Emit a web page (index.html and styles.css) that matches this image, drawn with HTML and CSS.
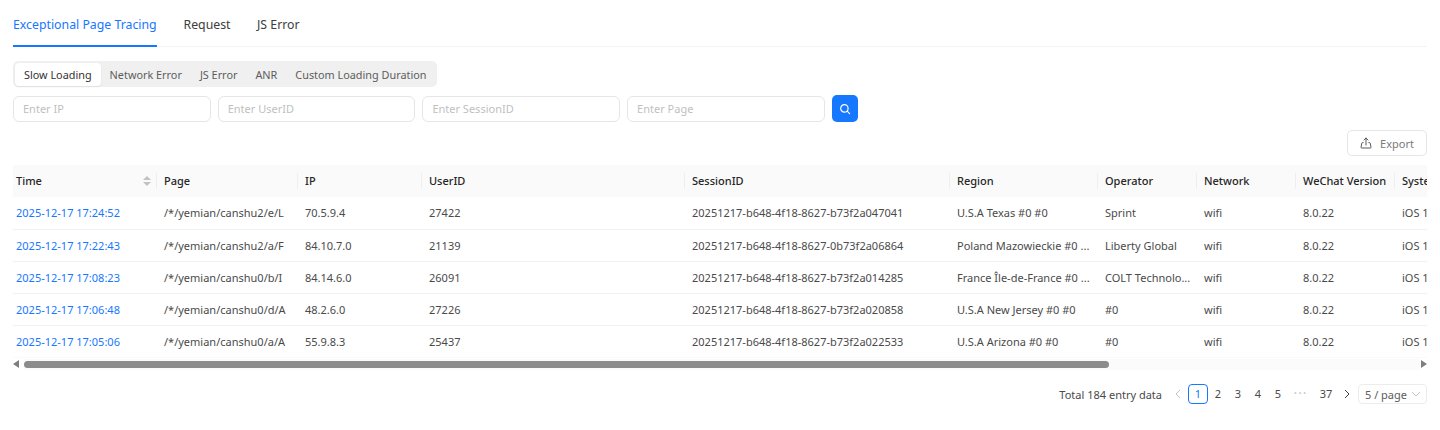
FILE: index.html
```html
<!DOCTYPE html>
<html lang="en">
<head>
<meta charset="utf-8">
<title>Exceptional Page Tracing</title>
<link rel="stylesheet" href="styles.css">
</head>
<body>
<main class="page">
  <nav class="tabs">
    <a class="tab active">Exceptional Page Tracing</a>
    <a class="tab">Request</a>
    <a class="tab">JS Error</a>
  </nav>
  <div class="segmented">
    <span class="seg selected">Slow Loading</span>
    <span class="seg">Network Error</span>
    <span class="seg">JS Error</span>
    <span class="seg">ANR</span>
    <span class="seg">Custom Loading Duration</span>
  </div>
  <div class="filters">
    <input class="field" placeholder="Enter IP">
    <input class="field" placeholder="Enter UserID">
    <input class="field" placeholder="Enter SessionID">
    <input class="field" placeholder="Enter Page">
    <button class="search" aria-label="Search">
      <svg width="12" height="12" viewBox="0 0 12 12" fill="none" stroke="#fff" stroke-width="1.2"><circle cx="5.4" cy="5.4" r="3.7"/><path d="M8.2 8.2l2.4 2.4" stroke-linecap="round"/></svg>
    </button>
  </div>
  <div class="actions">
    <button class="export">
      <svg width="12" height="12" viewBox="0 0 12 12" fill="none" stroke="#595959" stroke-width="1"><path d="M3.600 5.600H2.400a.6.6 0 0 0-.6.500L1 10.300c0 .4.200.7.600.7h8.800c.4 0 .6-.3.600-.7l-.8-4.200a.6.6 0 0 0-.6-.5H8.400"/><path d="M6 8V1M4 3l2-2 2 2" stroke-linecap="round" stroke-linejoin="round"/></svg>
      <span>Export</span>
    </button>
  </div>
  <div class="table-wrap">
    <table class="data">
      <colgroup>
        <col class="c-time"><col class="c-page"><col class="c-ip"><col class="c-user"><col class="c-session"><col class="c-region"><col class="c-operator"><col class="c-network"><col class="c-wechat"><col class="c-system">
      </colgroup>
      <thead>
        <tr>
          <th class="first">Time
            <span class="sorter"><i class="up"></i><i class="down"></i></span>
          </th>
          <th>Page</th><th>IP</th><th>UserID</th><th>SessionID</th><th>Region</th><th>Operator</th><th>Network</th><th>WeChat Version</th><th class="last">System</th>
        </tr>
      </thead>
      <tbody>
        <tr><td class="first"><a>2025-12-17 17:24:52</a></td><td>/*/yemian/canshu2/e/L</td><td>70.5.9.4</td><td>27422</td><td>20251217-b648-4f18-8627-b73f2a047041</td><td>U.S.A Texas #0 #0</td><td>Sprint</td><td>wifi</td><td>8.0.22</td><td>iOS 15.4</td></tr>
        <tr><td class="first"><a>2025-12-17 17:22:43</a></td><td>/*/yemian/canshu2/a/F</td><td>84.10.7.0</td><td>21139</td><td>20251217-b648-4f18-8627-0b73f2a06864</td><td>Poland Mazowieckie #0 ...</td><td>Liberty Global</td><td>wifi</td><td>8.0.22</td><td>iOS 15.4</td></tr>
        <tr><td class="first"><a>2025-12-17 17:08:23</a></td><td>/*/yemian/canshu0/b/I</td><td>84.14.6.0</td><td>26091</td><td>20251217-b648-4f18-8627-b73f2a014285</td><td>France Île-de-France #0 ...</td><td>COLT Technolo...</td><td>wifi</td><td>8.0.22</td><td>iOS 15.4</td></tr>
        <tr><td class="first"><a>2025-12-17 17:06:48</a></td><td>/*/yemian/canshu0/d/A</td><td>48.2.6.0</td><td>27226</td><td>20251217-b648-4f18-8627-b73f2a020858</td><td>U.S.A New Jersey #0 #0</td><td>#0</td><td>wifi</td><td>8.0.22</td><td>iOS 15.4</td></tr>
        <tr><td class="first"><a>2025-12-17 17:05:06</a></td><td>/*/yemian/canshu0/a/A</td><td>55.9.8.3</td><td>25437</td><td>20251217-b648-4f18-8627-b73f2a022533</td><td>U.S.A Arizona #0 #0</td><td>#0</td><td>wifi</td><td>8.0.22</td><td>iOS 15.4</td></tr>
      </tbody>
    </table>
  </div>
  <div class="scrollbar">
    <i class="arrow left"></i>
    <div class="track"><div class="thumb"></div></div>
    <i class="arrow right"></i>
  </div>
  <div class="pager">
    <span class="total">Total 184 entry data</span>
    <svg class="chev" width="8" height="10" viewBox="0 0 8 10" fill="none" stroke="#c4c4c4"><path d="M6 1L2 5l4 4"/></svg>
    <span class="pg current">1</span>
    <span class="pg">2</span>
    <span class="pg">3</span>
    <span class="pg">4</span>
    <span class="pg">5</span>
    <span class="pg dots">•••</span>
    <span class="pg wide">37</span>
    <svg class="chev next" width="8" height="10" viewBox="0 0 8 10" fill="none" stroke="#444"><path d="M2 1l4 4-4 4"/></svg>
    <span class="size"><span>5 / page</span>
      <svg width="10" height="6" viewBox="0 0 10 6" fill="none" stroke="#c4c4c4"><path d="M1 1l4 4 4-4"/></svg>
    </span>
  </div>
</main>
</body>
</html>
```
FILE: styles.css
```css
* { box-sizing: border-box; }
html, body { margin: 0; background: #fff; }
body {
  font-family: "Noto Sans", "Open Sans", sans-serif;
  font-size: 11px;
  color: #4a4a4a;
  height: 430px;
  overflow: hidden;
}
.page { width: 1427px; padding-left: 13px; }

.tabs {
  display: flex;
  gap: 26.500px;
  height: 47px;
  border-bottom: 1px solid #f4f4f4;
}
.tab {
  height: 47px;
  line-height: 50px;
  font-size: 12.300px;
  color: #3d3d3d;
  white-space: nowrap;
}
.tab.active {
  width: 144px;
  color: #1677ff;
  border-bottom: 2px solid #1677ff;
}

.segmented {
  display: inline-flex;
  align-items: center;
  margin-top: 14px;
  height: 26px;
  padding: 0 2px;
  background: #f0f0f0;
  border-radius: 5px;
  vertical-align: top;
  font-size: 10.850px;
}
.seg {
  height: 23px;
  line-height: 24px;
  padding: 0 9px;
  color: #5c5c5c;
  white-space: nowrap;
}
.seg.selected {
  color: #333;
  background: #fff;
  border-radius: 4px;
  box-shadow: 0 1px 2px rgba(0, 0, 0, .08);
}

.filters {
  display: flex;
  align-items: center;
  gap: 7px;
  margin-top: 8px;
  height: 27px;
}
.field {
  width: 197.700px;
  height: 26px;
  padding: 0 9px;
  font: inherit;
  border: 1px solid #e6e6e6;
  border-radius: 6px;
  outline: 0;
  background: #fff;
}
.field::placeholder { color: #bfbfbf; opacity: 1; }
.search {
  display: flex;
  align-items: center;
  justify-content: center;
  width: 26px;
  height: 27px;
  padding: 0;
  border: 0;
  border-radius: 5px;
  background: #1677ff;
}

.actions {
  display: flex;
  justify-content: flex-end;
  margin-top: 8px;
}
.export {
  display: flex;
  align-items: center;
  justify-content: center;
  gap: 8px;
  width: 80px;
  height: 26px;
  padding: 0;
  font: inherit;
  color: #7a7a7a;
  background: #fff;
  border: 1px solid #e6e6e6;
  border-radius: 5px;
}

.table-wrap {
  margin-top: 9px;
  width: 1414px;
  overflow: hidden;
}
.data {
  width: 1470px;
  table-layout: fixed;
  border-collapse: collapse;
}
.c-time { width: 144px; }
.c-page { width: 141px; }
.c-ip { width: 124px; }
.c-user { width: 263px; }
.c-session { width: 265px; }
.c-region { width: 148px; }
.c-operator { width: 99px; }
.c-network { width: 99px; }
.c-wechat { width: 99px; }
.c-system { width: 88px; }
.data th {
  position: relative;
  height: 32px;
  padding: 0 7px 1px;
  text-align: left;
  font-weight: 500;
  color: #262626;
  background: #fafafa;
  white-space: nowrap;
}
.data th:not(.last)::after {
  content: "";
  position: absolute;
  right: 0;
  top: 8px;
  height: 16px;
  width: 1px;
  background: #efefef;
}
.data td {
  height: 32px;
  padding: 0 7px;
  border-bottom: 1px solid #f2f2f2;
  white-space: nowrap;
  overflow: hidden;
}
.data tbody tr:last-child td { border-bottom-color: #fafafa; }
.data .first { padding-left: 3px; }
.data a { color: #1677ff; }
.sorter {
  position: absolute;
  right: 6px;
  top: 11px;
  display: flex;
  flex-direction: column;
  gap: 2px;
}
.sorter i {
  width: 0;
  height: 0;
  border-left: 4px solid transparent;
  border-right: 4px solid transparent;
}
.sorter .up { border-bottom: 4px solid #c2c2c2; }
.sorter .down { border-top: 4px solid #c2c2c2; }

.scrollbar {
  display: flex;
  align-items: center;
  width: 1414px;
  height: 11px;
  margin-top: 1px;
}
.arrow {
  flex: none;
  width: 0;
  height: 0;
  border-top: 4px solid transparent;
  border-bottom: 4px solid transparent;
}
.arrow.left { border-right: 6px solid #7f7f7f; }
.arrow.right { border-left: 6px solid #7f7f7f; }
.track {
  flex: 1;
  height: 11px;
  margin: 0 1px 0 5px;
  display: flex;
  align-items: center;
  background: #fbfbfb;
}
.thumb {
  width: 1085px;
  height: 7px;
  border-radius: 4px;
  background: #8c8c8c;
}

.pager {
  display: flex;
  align-items: center;
  justify-content: flex-end;
  margin-top: 14px;
  height: 21px;
  color: #4a4a4a;
}
.total { margin-right: 11px; }
.chev { margin: 0 4px 0 1px; flex: none; }
.chev.next { margin: 0 2px 0 5px; }
.pg {
  width: 20px;
  height: 20px;
  line-height: 18px;
  text-align: center;
  border: 1px solid transparent;
  border-radius: 4px;
}
.pg.current {
  margin-left: 2px;
  color: #1677ff;
  border-color: #1677ff;
}
.pg.dots {
  width: 26px;
  font-size: 7px;
  letter-spacing: 2px;
  color: #c4c4c4;
}
.pg.wide { width: 24px; }
.size {
  display: flex;
  align-items: center;
  justify-content: space-between;
  margin-left: 5px;
  width: 69px;
  height: 20px;
  padding: 0 5px 0 6px;
  border: 1px solid #ececec;
  border-radius: 4px;
  color: #5c5c5c;
  white-space: nowrap;
}
```
